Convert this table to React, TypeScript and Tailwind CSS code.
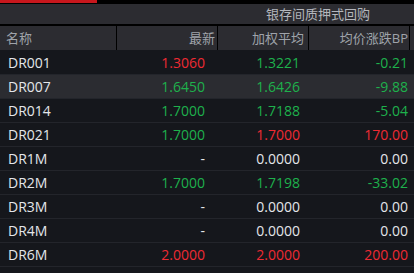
import React from "react";

type Row = {
  name: string;
  last: string;
  avg: string;
  bp: string;
  lastTone: "up" | "down" | "flat";
  avgTone: "up" | "down" | "flat";
  bpTone: "up" | "down" | "flat";
};

const rows: Row[] = [
  { name: "DR001", last: "1.3060", avg: "1.3221", bp: "-0.21", lastTone: "up", avgTone: "down", bpTone: "down" },
  { name: "DR007", last: "1.6450", avg: "1.6426", bp: "-9.88", lastTone: "down", avgTone: "down", bpTone: "down" },
  { name: "DR014", last: "1.7000", avg: "1.7188", bp: "-5.04", lastTone: "down", avgTone: "down", bpTone: "down" },
  { name: "DR021", last: "1.7000", avg: "1.7000", bp: "170.00", lastTone: "down", avgTone: "up", bpTone: "up" },
  { name: "DR1M", last: "-", avg: "0.0000", bp: "0.00", lastTone: "flat", avgTone: "flat", bpTone: "flat" },
  { name: "DR2M", last: "1.7000", avg: "1.7198", bp: "-33.02", lastTone: "down", avgTone: "down", bpTone: "down" },
  { name: "DR3M", last: "-", avg: "0.0000", bp: "0.00", lastTone: "flat", avgTone: "flat", bpTone: "flat" },
  { name: "DR4M", last: "-", avg: "0.0000", bp: "0.00", lastTone: "flat", avgTone: "flat", bpTone: "flat" },
  { name: "DR6M", last: "2.0000", avg: "2.0000", bp: "200.00", lastTone: "up", avgTone: "up", bpTone: "up" },
];

const tone = {
  up: "text-[#ee2a33]",
  down: "text-[#1eb14c]",
  flat: "text-[#e4e6ea]",
};

const font = { fontFamily: '"Open Sans", "Noto Sans CJK SC", sans-serif' };

export default function App() {
  return (
    <div className="w-[414px] h-[273px] overflow-hidden bg-[#15171c]" style={font}>
      {/* top tab strip */}
      <div className="flex h-[3px] bg-black">
        <div className="w-[97px] bg-[#c8171d]" />
      </div>
      <div className="h-px bg-black" />

      {/* title */}
      <div className="h-[20px] bg-[#2c2c31] pl-[266px] flex items-center text-[13px] text-[#b4b7bd] leading-none">
        银存间质押式回购
      </div>
      <div className="h-[2px] bg-black" />

      {/* header */}
      <div className="flex h-[24px] bg-[#2c2c31] text-[13px] text-[#9fa3aa] leading-none">
        <div className="w-[117px] border-r border-black flex items-center pl-[6px]">名称</div>
        <div className="w-[101px] border-r border-black flex items-center justify-end pr-[2px]">最新</div>
        <div className="w-[91px] border-r border-black flex items-center justify-end pr-[4px]">加权平均</div>
        <div className="w-[101px] border-r border-black flex items-center justify-end pr-[1px]">均价涨跌BP</div>
      </div>
      <div className="h-px bg-[#15171c]" />

      {/* rows */}
      {rows.map((r, i) => (
        <div
          key={r.name}
          className={`flex h-[24px] border-b border-[#23252b] text-[14px] leading-none ${
            i === 1 ? "bg-[#2b2c31]" : "bg-[#15171c]"
          }`}
        >
          <div className="w-[117px] flex items-center pl-[8px] text-[#e4e6ea]">{r.name}</div>
          <div className={`w-[101px] flex items-center justify-end pr-[13px] ${tone[r.lastTone]}`}>{r.last}</div>
          <div className={`w-[91px] flex items-center justify-end pr-[9px] ${tone[r.avgTone]}`}>{r.avg}</div>
          <div className={`w-[101px] flex items-center justify-end pr-[2px] ${tone[r.bpTone]}`}>{r.bp}</div>
        </div>
      ))}
    </div>
  );
}
